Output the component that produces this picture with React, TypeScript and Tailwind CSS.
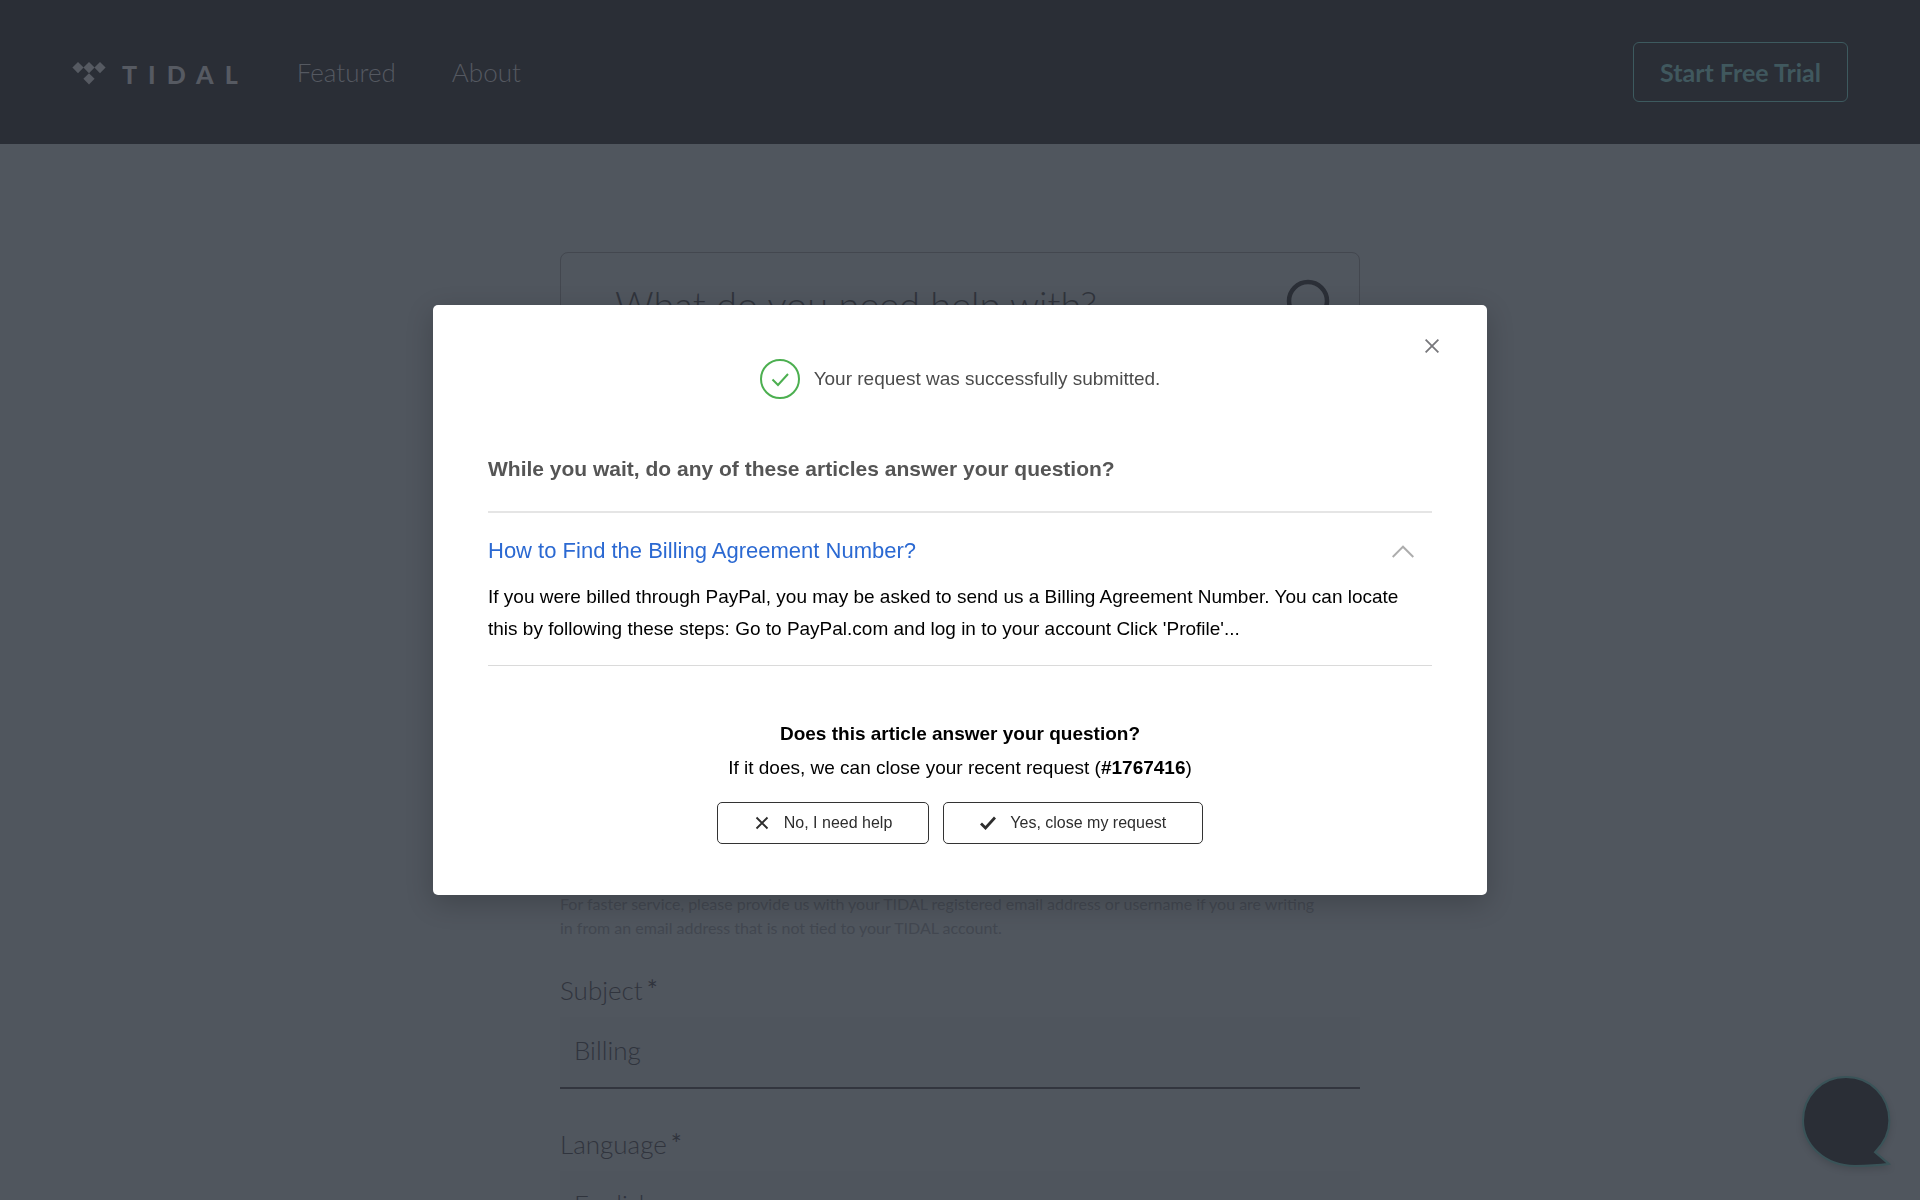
import { useState } from "react";

const LABEL = "text-[26px] leading-8 font-light text-[#30343d]";
const FIELD = "h-[72px] w-full appearance-none border-b-2 border-[#32353e] bg-[#4f555d] px-3.5 pb-1 text-[26px] font-light text-[#30343d] outline-none";

function Logo() {
  return (
    <a href="#" aria-label="TIDAL" className="flex items-center gap-4 pt-1 text-[#565a62]">
      <svg width="34" height="24" viewBox="0 0 34 24" fill="currentColor" aria-hidden="true">
        <path d="M6 0l5.600 5.600L6 11.200.4 5.600z" />
        <path d="M17 0l5.600 5.600L17 11.200 11.400 5.600z" />
        <path d="M28 0l5.600 5.600L28 11.200 22.400 5.600z" />
        <path d="M17 11.200l5.600 5.600L17 22.400 11.400 16.800z" />
      </svg>
      <span className="text-[25px] leading-8 font-black tracking-[11px]">TIDAL</span>
    </a>
  );
}

function Header() {
  return (
    <header className="flex h-36 items-center justify-between bg-[#2a2e36] px-[72px]">
      <div className="flex items-center gap-12">
        <Logo />
        <nav className="flex gap-14 text-[26px] leading-8 font-light text-[#555961]">
          <a href="#">Featured</a>
          <a href="#">About</a>
        </nav>
      </div>
      <a href="#" className="rounded-md border border-[#3d5a5f] px-[26px] py-[13px] text-[25px] leading-8 font-bold text-[#40585e]">
        Start Free Trial
      </a>
    </header>
  );
}

function HelpForm() {
  return (
    <main className="mx-auto mt-[108px] flex w-full max-w-[800px] flex-col">
      <form className="flex items-center justify-between rounded-lg border border-[#43474f] py-[25px] pr-[26px] pl-[54px]">
        <input
          type="text"
          aria-label="Search"
          placeholder="What do you need help with?"
          className="min-w-0 flex-1 bg-transparent text-[38px] leading-[52px] font-light outline-none placeholder:text-[#30343c]"
        />
        <button type="submit" aria-label="Submit search" className="text-[#2b2f37]">
          <svg width="50" height="50" viewBox="0 0 50 50" fill="none" stroke="currentColor" strokeWidth="4.500">
            <circle cx="25" cy="22" r="19" />
            <path d="M38 36l10 11" />
          </svg>
        </button>
      </form>

      <form className="mt-[536px] flex flex-col">
        <p className="pr-10 text-base leading-6 text-[#424750]">
          For faster service, please provide us with your TIDAL registered email address or username if you are writing
          in from an email address that is not tied to your TIDAL account.
        </p>

        <label htmlFor="subject" className={`${LABEL} mt-[34px]`}>
          Subject<span className="ml-1 font-normal">*</span>
        </label>
        <input id="subject" type="text" defaultValue="Billing" className={`${FIELD} mt-[11px]`} />

        <label htmlFor="language" className={`${LABEL} mt-[39px]`}>
          Language<span className="ml-1 font-normal">*</span>
        </label>
        <div className="relative mt-[11px] shrink-0">
          <select id="language" defaultValue="en" className={FIELD}>
            <option value="en">English</option>
          </select>
          <svg className="pointer-events-none absolute top-7 right-3.5" width="13" height="8" viewBox="0 0 13 8" fill="#363a43">
            <path d="M0 1h13L6.500 8z" />
          </svg>
        </div>
      </form>
    </main>
  );
}

function ChatButton() {
  return (
    <button aria-label="Open chat" className="fixed right-6 bottom-[30px]">
      <svg width="94" height="94" viewBox="0 0 92 92" fill="#2a2e36" stroke="#3a5358" strokeWidth="2" className="drop-shadow-md">
        <path d="M43 1C19 1 1 20 1 43.500 1 67 22 88 52 88c11 0 22-.5 33-2L71.500 74.500C80 66 85.500 56 85.500 43.500 85.500 20 67 1 43 1z" />
      </svg>
    </button>
  );
}

function ArticleModal({ onClose }: { onClose: () => void }) {
  const [expanded, setExpanded] = useState(true);

  return (
    <div className="fixed inset-0 flex items-center justify-center font-['Liberation_Sans',Arial,sans-serif]">
      <div
        role="dialog"
        aria-modal="true"
        aria-labelledby="modal-title"
        className="relative w-full max-w-[1054px] rounded-[5px] bg-white px-[55px] pt-[54px] pb-[51px] text-black shadow-[0_8px_28px_rgba(0,0,0,0.2)]"
      >
        <button aria-label="Close" onClick={onClose} className="absolute top-[34px] right-12 text-[#77777b]">
          <svg width="14" height="14" viewBox="0 0 14 14" fill="none" stroke="currentColor" strokeWidth="1.800">
            <path d="M.6.6l12.800 12.800M13.400.6L.6 13.400" />
          </svg>
        </button>

        <div className="flex items-center justify-center gap-3.5">
          <svg width="40" height="40" viewBox="0 0 40 40" fill="none" stroke="#4caf50" strokeWidth="2">
            <circle cx="20" cy="20" r="19" />
            <path d="M12.500 20.500l5.500 5.500L28 15" />
          </svg>
          <p className="text-[19px] leading-6 text-[#4b4b4b]">Your request was successfully submitted.</p>
        </div>

        <h2 id="modal-title" className="mt-14 text-[21px] leading-7 font-bold text-[#555]">
          While you wait, do any of these articles answer your question?
        </h2>

        <section className="mt-7 border-t-2 border-b border-t-[#e5e5e5] border-b-[#dadada] pt-6 pb-5">
          <div className="flex items-center justify-between pr-[18px]">
            <a href="#" className="text-[22px] leading-7 text-[#2b69d2]">
              How to Find the Billing Agreement Number?
            </a>
            <button aria-label="Toggle article" aria-expanded={expanded} onClick={() => setExpanded(!expanded)}>
              <svg width="22" height="13" viewBox="0 0 22 13" fill="none" stroke="#adadad" strokeWidth="2">
                <path d="M.7 12L11 1.700 21.300 12" />
              </svg>
            </button>
          </div>
          {expanded && (
            <p className="mt-4 text-[19px] leading-8">
              If you were billed through PayPal, you may be asked to send us a Billing Agreement Number. You can locate
              this by following these steps: Go to PayPal.com and log in to your account Click 'Profile'...
            </p>
          )}
        </section>

        <div className="mt-14 text-center text-[19px]">
          <h3 className="leading-6 font-bold">Does this article answer your question?</h3>
          <p className="mt-2.5 leading-6">
            If it does, we can close your recent request (<b>#1767416</b>)
          </p>
        </div>

        <div className="mt-[22px] flex justify-center gap-3.5 text-base leading-6 text-[#2d2d2d]">
          <button onClick={onClose} className="flex items-center gap-3.5 rounded-[5px] border border-[#333] px-9 py-2">
            <svg width="16" height="16" viewBox="0 0 16 16" fill="none" stroke="currentColor" strokeWidth="1.800">
              <path d="M2.500 2.500l11 11M13.500 2.500l-11 11" />
            </svg>
            No, I need help
          </button>
          <button onClick={onClose} className="flex items-center gap-3.5 rounded-[5px] border border-[#333] px-9 py-2">
            <svg width="16" height="14" viewBox="0 0 16 14" fill="none" stroke="currentColor" strokeWidth="2.800">
              <path d="M1 7.500l4.500 4.500L15 1.500" />
            </svg>
            Yes, close my request
          </button>
        </div>
      </div>
    </div>
  );
}

export default function App() {
  const [open, setOpen] = useState(true);

  return (
    <div className="h-screen overflow-hidden bg-[#50565e] font-['Lato',sans-serif]">
      <Header />
      <HelpForm />
      <ChatButton />
      {open && <ArticleModal onClose={() => setOpen(false)} />}
    </div>
  );
}
